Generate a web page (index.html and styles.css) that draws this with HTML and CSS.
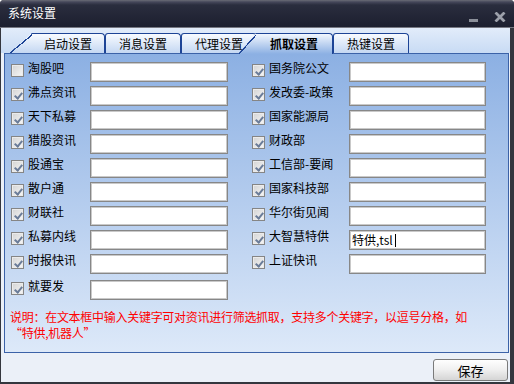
FILE: index.html
```html
<!DOCTYPE html>
<html lang="zh-CN">
<head>
  <meta charset="UTF-8" />
  <title>系统设置</title>
  <link rel="stylesheet" href="styles.css">
</head>
<body>
  <div class="window">
    <div class="titlebar">
      <span class="title">系统设置</span>
      <div class="controls">
        <svg class="btn-min" width="9" height="3" viewBox="0 0 9 3"><rect width="9" height="3" fill="#8b8f99"/></svg>
        <svg class="btn-close" width="12" height="10" viewBox="0 0 12 10"><path d="M1.5 0.5 L10.5 9.5 M10.5 0.5 L1.5 9.5" stroke="#9ca0aa" stroke-width="2.8"/></svg>
      </div>
    </div>

    <div class="content">
      <div class="tabs">
        <div class="tab first">启动设置</div>
        <div class="tab">消息设置</div>
        <div class="tab">代理设置</div>
        <div class="tab active">抓取设置</div>
        <div class="tab">热键设置</div>
      </div>

      <div class="panel">
        <div class="columns">
          <div class="col left">
            <div class="row"><span class="check"></span><span class="label">淘股吧</span><div class="field"></div></div>
            <div class="row"><span class="check on"></span><span class="label">沸点资讯</span><div class="field"></div></div>
            <div class="row"><span class="check on"></span><span class="label">天下私募</span><div class="field"></div></div>
            <div class="row"><span class="check on"></span><span class="label">猎股资讯</span><div class="field"></div></div>
            <div class="row"><span class="check on"></span><span class="label">股通宝</span><div class="field"></div></div>
            <div class="row"><span class="check on"></span><span class="label">散户通</span><div class="field"></div></div>
            <div class="row"><span class="check on"></span><span class="label">财联社</span><div class="field"></div></div>
            <div class="row"><span class="check on"></span><span class="label">私募内线</span><div class="field"></div></div>
            <div class="row"><span class="check on"></span><span class="label">时报快讯</span><div class="field"></div></div>
            <div class="row last"><span class="check on"></span><span class="label">就要发</span><div class="field"></div></div>
          </div>
          <div class="col right">
            <div class="row"><span class="check on"></span><span class="label">国务院公文</span><div class="field"></div></div>
            <div class="row"><span class="check on"></span><span class="label">发改委-政策</span><div class="field"></div></div>
            <div class="row"><span class="check on"></span><span class="label">国家能源局</span><div class="field"></div></div>
            <div class="row"><span class="check on"></span><span class="label">财政部</span><div class="field"></div></div>
            <div class="row"><span class="check on"></span><span class="label">工信部-要闻</span><div class="field"></div></div>
            <div class="row"><span class="check on"></span><span class="label">国家科技部</span><div class="field"></div></div>
            <div class="row"><span class="check on"></span><span class="label">华尔街见闻</span><div class="field"></div></div>
            <div class="row"><span class="check on"></span><span class="label">大智慧特供</span><div class="field">特供,tsl<span class="caret"></span></div></div>
            <div class="row"><span class="check on"></span><span class="label">上证快讯</span><div class="field"></div></div>
          </div>
        </div>
        <p class="note">说明：在文本框中输入关键字可对资讯进行筛选抓取，支持多个关键字，以逗号分格，如<br>“特供,机器人”</p>
      </div>

      <div class="footer">
        <button class="save">保存</button>
      </div>
    </div>
  </div>
</body>
</html>
```

FILE: styles.css
```css
* {
  box-sizing: border-box;
}

body {
  margin: 0;
  font-family: "Noto Sans CJK SC", "Noto Sans", sans-serif;
  font-size: 12px;
  color: #000;
  background: #fff;
}

.window {
  width: 514px;
  height: 384px;
  display: flex;
  flex-direction: column;
  background: #34363e;
  border-radius: 4px 4px 0 0;
  overflow: hidden;
}

.titlebar {
  height: 28px;
  flex: none;
  display: flex;
  align-items: flex-end;
  padding: 0 8px 5px 8px;
  border-bottom: 1px solid #767882;
  background: linear-gradient(#6a6c76, #45475a 2px, #2a2d3e 5px, #1c1f2f);
  color: #fff;
}

.title {
  align-self: flex-start;
  margin-top: 7px;
  line-height: 12px;
}

.controls {
  margin-left: auto;
  display: flex;
  align-items: flex-end;
  gap: 16px;
}

.controls svg {
  display: block;
}

.content {
  flex: 1;
  margin: 0 4px 2px 1px;
  display: flex;
  flex-direction: column;
  background: #ebf0f8;
}

.tabs {
  height: 25px;
  flex: none;
  display: flex;
  align-items: flex-end;
  padding: 5px 0 0 8px;
  background: linear-gradient(#e2ecfa, #c8dbf4);
  position: relative;
  z-index: 1;
}

.tab {
  width: 76px;
  height: 20px;
  border: 1px solid #1d4496;
  border-bottom: none;
  border-radius: 3px 4px 0 0;
  background: linear-gradient(#f8fbff, #c4d7f2);
  text-align: center;
  line-height: 19px;
}

.tab.first {
  width: 96px;
  padding-left: 23px;
  border-left: none;
  border-radius: 0 4px 0 0;
  clip-path: polygon(0 100%, 23px 0, 100% 0, 100% 100%);
  background:
    linear-gradient(to bottom right, transparent 50%, #1d4496 50%, #1d4496 calc(50% + 1.3px), transparent calc(50% + 1.3px)) 0 0 / 23px 100% no-repeat,
    linear-gradient(#f8fbff, #c4d7f2);
}

.tab.active {
  width: 95px;
  height: 21px;
  margin-left: -19px;
  margin-bottom: -1px;
  padding-left: 18px;
  border-left: none;
  border-radius: 0 4px 0 0;
  font-weight: bold;
  position: relative;
  z-index: 2;
  clip-path: polygon(0 100%, 18px 0, 100% 0, 100% 100%);
  background:
    linear-gradient(to bottom right, transparent 50%, #1d4496 50%, #1d4496 calc(50% + 1.3px), transparent calc(50% + 1.3px)) 0 0 / 18px 100% no-repeat,
    linear-gradient(#f2f7fe, #8cb0e3);
}

.panel {
  height: 300px;
  flex: none;
  margin: 0 1px 0 3px;
  padding: 8px 6px 0 6px;
  border: 1px solid #3b62a8;
  background: linear-gradient(#8cb0e3, #dde9f9);
}

.columns {
  display: flex;
}

.col {
  display: flex;
  flex-direction: column;
  gap: 4px;
}

.col.right {
  margin-left: 24px;
}

.row {
  height: 20px;
  display: grid;
  grid-template-columns: 13px 58px 138px;
  column-gap: 4px;
}

.right .row {
  grid-template-columns: 13px 76px 137px;
}

.row.last {
  margin-top: 2px;
}

.check {
  width: 13px;
  height: 13px;
  margin-top: 2px;
  border: 1px solid #858585;
  background: linear-gradient(135deg, #d3d3d3, #f7f7f7);
  box-shadow: inset 0 0 0 1px #ebebeb;
  position: relative;
}

.check.on::after {
  content: "";
  position: absolute;
  left: 4px;
  top: 2px;
  width: 3px;
  height: 6px;
  border: solid #6a7c99;
  border-width: 0 2px 2px 0;
  transform: rotate(40deg);
}

.label {
  line-height: 12px;
  white-space: nowrap;
}

.field {
  height: 20px;
  padding: 0 2px;
  border: 1px solid #878787;
  box-shadow: inset 0 0 0 1px #c9c9c9;
  background: #fff;
  line-height: 18px;
  white-space: nowrap;
}

.caret {
  display: inline-block;
  width: 1px;
  height: 13px;
  margin-left: 2px;
  vertical-align: -2px;
  background: #000;
}

.note {
  margin: 9px 0 0 -1px;
  color: #f00;
  line-height: 16px;
  letter-spacing: -0.28px;
}

.footer {
  display: flex;
  justify-content: flex-end;
  padding: 6px 2px 0 0;
}

.save {
  width: 75px;
  height: 22px;
  padding: 0;
  border: 1px solid #7a7a7a;
  border-radius: 3px;
  background: linear-gradient(#fefefe, #f1f1f1 45%, #d5d5d5);
  font-family: "Noto Sans CJK SC", sans-serif;
  font-size: 13px;
  color: #000;
}
```
